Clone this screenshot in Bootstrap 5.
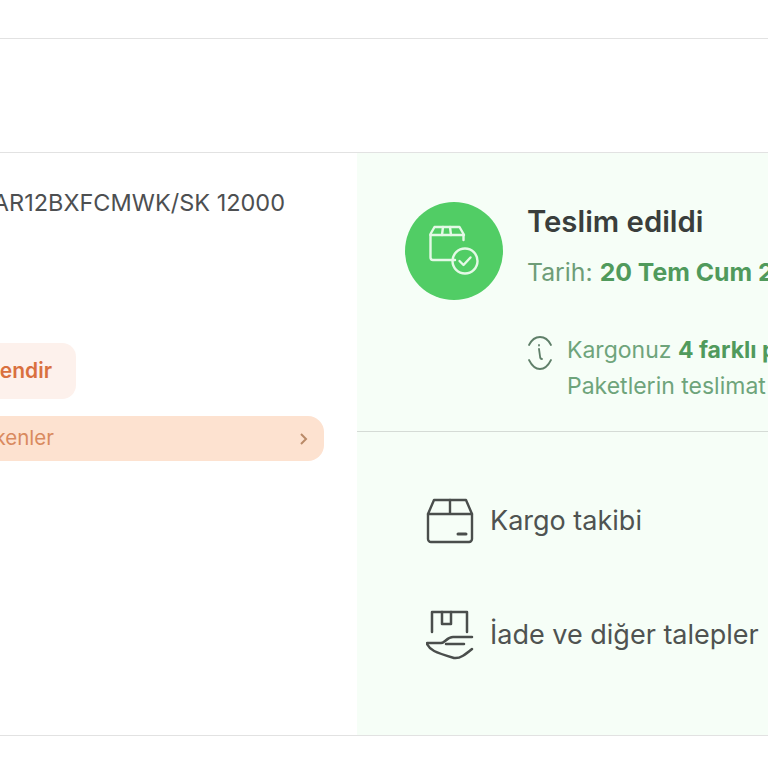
<!DOCTYPE html>
<html lang="tr">
<head>
  <meta charset="UTF-8" />
  <meta name="viewport" content="width=device-width, initial-scale=1" />
  <title>Siparişlerim</title>
  <link href="https://cdn.jsdelivr.net/npm/bootstrap@5.3.3/dist/css/bootstrap.min.css" rel="stylesheet" />
  <style>
    html, body {
      height: 768px;
      overflow: hidden;
    }
    body {
      font-family: "Inter", "Liberation Sans", sans-serif;
      background: #fff;
      color: #4a4f4c;
    }
    .top-strip {
      height: 39px;
      border-bottom: 1px solid #e2e2e2;
    }
    .head-strip {
      height: 114px;
      border-bottom: 1px solid #e2e2e2;
    }
    .order-row {
      height: 583px;
      border-bottom: 1px solid #e2e2e2;
    }
    .product-side {
      width: 357px;
      flex-shrink: 0;
      padding-top: 36px;
      overflow: hidden;
    }
    .product-code {
      font-size: 23.5px;
      line-height: 28px;
      color: #4d4f51;
      height: 28px;
      white-space: nowrap;
      display: flex;
      justify-content: flex-end;
      width: 285px;
      overflow: hidden;
    }
    .rate-pill {
      width: 76px;
      height: 56px;
      margin-top: 126px;
      background: #fdf1ec;
      border-radius: 0 14px 14px 0;
      color: #d9703f;
      font-size: 21px;
      font-weight: 600;
      white-space: nowrap;
      padding-right: 24px;
      overflow: hidden;
    }
    .tips-pill {
      width: 324px;
      height: 45px;
      margin-top: 17px;
      background: #fde2d0;
      border-radius: 0 16px 16px 0;
      color: #d98a5f;
      font-size: 20.5px;
      white-space: nowrap;
      padding-right: 14px;
      overflow: hidden;
    }
    .tips-text {
      width: 54px;
      overflow: hidden;
    }
    .status-side {
      background: #f6fef7;
      min-width: 0;
    }
    .status-top {
      height: 279px;
      padding: 49px 0 0 48px;
      border-bottom: 1px solid #d5dbd6;
      white-space: nowrap;
      overflow: hidden;
    }
    .status-circle {
      width: 98px;
      height: 98px;
      border-radius: 50%;
      background: #51cd65;
      flex-shrink: 0;
    }
    .status-title {
      font-size: 29.3px;
      line-height: 32px;
      font-weight: 600;
      color: #3a3e3c;
      margin-top: 4px;
    }
    .status-date {
      font-size: 24.8px;
      line-height: 30px;
      color: #6e9d78;
      margin-top: 19px;
    }
    .status-date b, .status-note b {
      font-weight: 700;
      color: #509a5c;
    }
    .status-note {
      font-size: 23px;
      line-height: 36px;
      color: #6ea47b;
      margin-top: 45px;
    }
    .note-icon {
      margin: 4px 14px 0 0;
      flex-shrink: 0;
    }
    .action-list {
      padding: 65px 0 0 69px;
      font-size: 27px;
      line-height: 34px;
      color: #4f5351;
      white-space: nowrap;
    }
    .action-item {
      height: 48px;
    }
    .action-item + .action-item {
      margin-top: 66px;
    }
  </style>
</head>
<body>
  <div class="top-strip"></div>
  <div class="head-strip"></div>

  <div class="order-row d-flex">
    <div class="product-side">
      <div class="product-code">Ürün Kodu: AR12BXFCMWK/SK 12000</div>
      <div class="rate-pill d-flex align-items-center justify-content-end">Değerlendir</div>
      <div class="tips-pill d-flex align-items-center justify-content-between">
        <div class="tips-text d-flex justify-content-end">Bilmeniz gerekenler</div>
        <svg width="12" height="14" viewBox="0 0 12 14" fill="none" stroke="#b98a68" stroke-width="2"><path d="M3 2l5 5-5 5"/></svg>
      </div>
    </div>

    <div class="status-side flex-grow-1">
      <div class="status-top d-flex">
        <div class="status-circle d-flex align-items-center justify-content-center">
          <svg width="52" height="52" viewBox="2 3 52 52" fill="none" stroke="#e4f9e6" stroke-width="2.400" stroke-linecap="round" stroke-linejoin="round">
            <path d="M29 38H7a2.500 2.500 0 0 1-2.500-2.500V12l4-7h25l4 7v6"/>
            <path d="M4.500 13H38"/>
            <path d="M17 5l-1 8M24 5l1 8"/>
            <circle cx="39" cy="39" r="12.500"/>
            <path d="M33.500 39l4 4 7-7.500"/>
          </svg>
        </div>
        <div class="status-text ms-4">
          <div class="status-title">Teslim edildi</div>
          <div class="status-date">Tarih: <b>20 Tem Cum 2024</b></div>
          <div class="status-note d-flex">
            <svg class="note-icon" width="26" height="34" viewBox="0 0 26 34" fill="none" stroke="#5f7f69" stroke-width="1.800" stroke-linecap="round">
              <path d="M2 9C5 3 9 1 13 1s8 2 11 8"/>
              <path d="M2 24c3 6 7 9 11 9s8-3 11-9"/>
              <path d="M12 9v.5M12 13l1 7c0 2 1 3 2 3"/>
            </svg>
            <div>
              <div>Kargonuz <b>4 farklı paket</b> halinde gönderildi.</div>
              <div>Paketlerin teslimat durumunu görebilirsiniz.</div>
            </div>
          </div>
        </div>
      </div>

      <div class="action-list">
        <div class="action-item d-flex align-items-center">
          <svg class="me-3" width="48" height="48" viewBox="0 0 48 48" fill="none" stroke="#4a4e4c" stroke-width="2.400" stroke-linecap="round" stroke-linejoin="round">
            <path d="M2 17l6-14h32l6 14v25a3 3 0 0 1-3 3H5a3 3 0 0 1-3-3z"/>
            <path d="M2 17h44M24 3v14"/>
            <path d="M32 37h8" stroke-width="3"/>
          </svg>
          <span>Kargo takibi</span>
        </div>
        <div class="action-item d-flex align-items-center">
          <svg class="me-3" width="48" height="50" viewBox="0 0 48 50" fill="none" stroke="#4a4e4c" stroke-width="2.500" stroke-linecap="round" stroke-linejoin="round">
            <path d="M6 22V2h35v20"/>
            <path d="M16 2v12h9V2"/>
            <path d="M1 33h14c4 0 6-6 12-6h19"/>
            <path d="M20 34h18"/>
            <path d="M1 34c3 6 7 8 27 14 6 1 12-4 18-9"/>
          </svg>
          <span>İade ve diğer talepler</span>
        </div>
      </div>
    </div>
  </div>
</body>
</html>
